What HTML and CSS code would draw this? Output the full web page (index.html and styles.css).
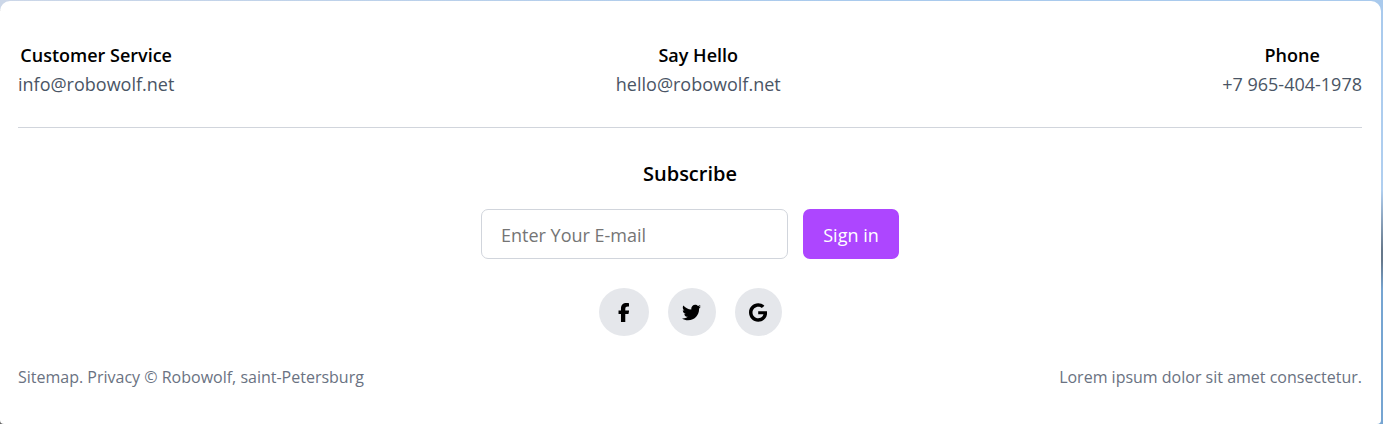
FILE: index.html
```html
<!DOCTYPE html>
<html lang="en">
<head>
<meta charset="utf-8">
<meta name="viewport" content="width=device-width, initial-scale=1">
<title>Robowolf</title>
<link rel="stylesheet" href="styles.css">
</head>
<body>
<footer class="footer">
  <div class="contacts">
    <div class="contact"><h2 class="contact-title">Customer Service</h2><a class="contact-link" href="mailto:info@robowolf.net">info@robowolf.net</a></div>
    <div class="contact"><h2 class="contact-title">Say Hello</h2><a class="contact-link" href="mailto:hello@robowolf.net">hello@robowolf.net</a></div>
    <div class="contact"><h2 class="contact-title">Phone</h2><a class="contact-link" href="tel:+79654041978">+7 965-404-1978</a></div>
  </div>
  <form class="subscribe">
    <label class="subscribe-title" for="email">Subscribe</label>
    <div class="subscribe-row">
      <input class="email" id="email" type="email" placeholder="Enter Your E-mail">
      <button class="sign-in" type="submit">Sign in</button>
    </div>
  </form>
  <nav class="social" aria-label="Social networks">
    <a class="social-link facebook" href="#" aria-label="Facebook"><svg class="icon" viewBox="0 0 320 512"><path d="M80 299.3V512H196V299.3h86.5l18-97.8H196V166.900c0-51.700 20.300-71.500 72.700-71.500c16.300 0 29.400 .4 37 1.200V7.900C291.400 4 256.400 0 236.200 0C129.300 0 80 50.500 80 159.400v42.100H14v97.800H80z"/></svg></a>
    <a class="social-link" href="#" aria-label="Twitter"><svg class="icon" viewBox="0 0 512 512"><path d="M459.370 151.716c.325 4.548.325 9.097.325 13.645 0 138.720-105.583 298.558-298.558 298.558-59.452 0-114.680-17.219-161.137-47.106 8.447.974 16.568 1.299 25.340 1.299 49.055 0 94.213-16.568 130.274-44.832-46.132-.975-84.792-31.188-98.112-72.772 6.498.974 12.995 1.624 19.818 1.624 9.421 0 18.843-1.300 27.614-3.573-48.081-9.747-84.143-51.980-84.143-102.985v-1.299c13.969 7.797 30.214 12.670 47.431 13.319-28.264-18.843-46.781-51.005-46.781-87.391 0-19.492 5.197-37.360 14.294-52.954 51.655 63.675 129.300 105.258 216.365 109.807-1.624-7.797-2.599-15.918-2.599-24.040 0-57.828 46.782-104.934 104.934-104.934 30.213 0 57.502 12.670 76.670 33.137 23.715-4.548 46.456-13.320 66.599-25.340-7.798 24.366-24.366 44.833-46.132 57.827 21.117-2.273 41.584-8.122 60.426-16.243-14.292 20.791-32.161 39.308-52.628 54.253z"/></svg></a>
    <a class="social-link google" href="#" aria-label="Google"><svg class="icon" viewBox="0 0 488 512"><path d="M488 261.800C488 403.300 391.100 504 248 504 110.800 504 0 393.200 0 256S110.800 8 248 8c66.800 0 123 24.500 166.300 64.900l-67.500 64.900C258.500 52.600 94.300 116.600 94.300 256c0 86.500 69.100 156.600 153.700 156.600 98.200 0 135-70.400 140.800-106.900H248v-85.300h236.100c2.300 12.700 3.900 24.900 3.900 41.400z"/></svg></a>
  </nav>
  <div class="legal">
    <p class="legal-text">Sitemap. Privacy © Robowolf, saint-Petersburg</p>
    <p class="legal-text">Lorem ipsum dolor sit amet consectetur.</p>
  </div>
</footer>
</body>
</html>
```
FILE: styles.css
```css
* { box-sizing: border-box; }

body {
  margin: 0;
  padding: 1px 2px 0 0;
  background:
    linear-gradient(#a9caed 0, #b0cff0 190px, #66788b 250px, #66788b 260px, #76a5d2 290px, #76a5d2 100%) right / 8px 100% no-repeat,
    linear-gradient(90deg, #ccd7e8, #a9caed 60%) top / 100% 10px no-repeat,
    #666;
  font-family: "Segoe UI", "Open Sans", "Noto Sans", sans-serif;
  color: #000;
}

h2, p { margin: 0; }
a { text-decoration: none; }

.footer {
  padding: 40px 19px 34px 18px;
  border-radius: 10px 10px 4px 4px;
  background: #fff;
}

.contacts {
  display: flex;
  justify-content: space-between;
  padding-bottom: 28px;
  border-bottom: 1px solid #d1d5dc;
}

.contact { text-align: center; }

.contact-title {
  font-size: 18px;
  line-height: 28px;
  font-weight: 600;
}

.contact-link {
  display: block;
  font-size: 18px;
  line-height: 30px;
  color: #4a5565;
}

.subscribe {
  display: flex;
  flex-direction: column;
  align-items: center;
  gap: 20px;
  padding-top: 30px;
}

.subscribe-title {
  font-size: 20px;
  line-height: 31px;
  font-weight: 600;
}

.subscribe-row {
  display: flex;
  gap: 15px;
}

.email, .sign-in {
  height: 50px;
  border-radius: 7px;
  font: inherit;
  font-size: 18px;
}

.email {
  width: 307px;
  padding: 2px 19px 0;
  border: 1px solid #d1d5dc;
  background: #fff;
}

.email::placeholder { color: #757575; opacity: 1; }

.sign-in {
  width: 96px;
  padding: 2px 0 0;
  border: 0;
  background: #ad46ff;
  color: #fff;
}

.social {
  display: flex;
  justify-content: center;
  gap: 19px;
  padding-top: 29px;
}

.social-link {
  display: flex;
  align-items: center;
  justify-content: center;
  width: 48px;
  height: 48px;
  border-radius: 50%;
  background: #e5e7eb;
  color: #000;
}

.facebook { width: 50px; }
.google { width: 47px; }

.icon {
  height: 19px;
  fill: currentColor;
}

.legal {
  display: flex;
  justify-content: space-between;
  padding-top: 29px;
}

.legal-text {
  font-size: 16px;
  line-height: 25px;
  color: #6a7282;
}
```
